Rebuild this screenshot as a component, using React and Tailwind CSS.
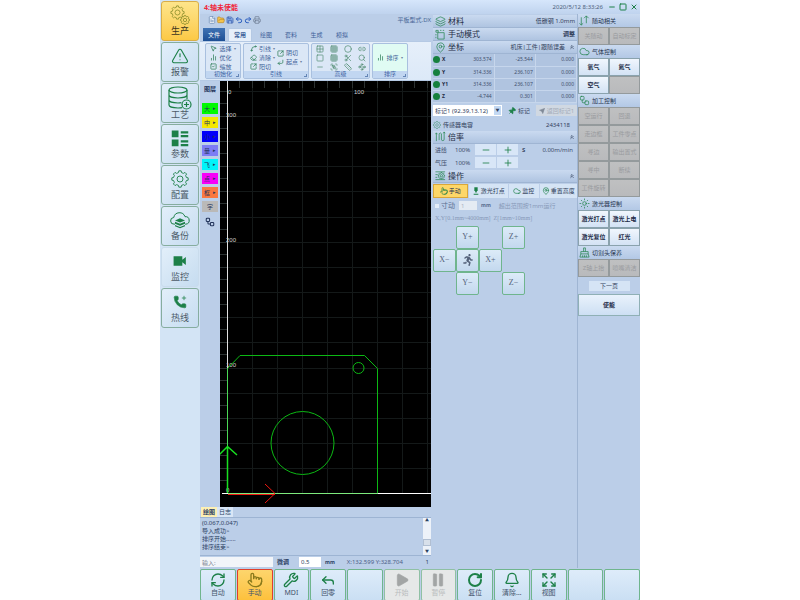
import {
  Bell, ChevronsUp, Cloud, FileText, FolderOpen, Layers, MapPin, Minus, Pause, Phone, Pin, Play, Plus,
  Pointer, Printer, RefreshCw, Reply, RotateCw, Save, Square, TriangleAlert, Undo2, Redo2, Wrench, X,
  MousePointer2, ChartNoAxesColumn, SquareArrowOutUpRight, SquareCheck, Eraser, CornerDownLeft, Spline,
  Grid2x2, Grid3x3, Circle, Link2, Search, Scissors, Ruler, Group, Waypoints, Sun, Workflow, Send, Expand,
} from 'lucide-react';
import { FaRunning } from 'react-icons/fa';

const GREEN = '#1d8048';

// Outline of a gear with flat teeth
function gearPath(cx, cy, r, teeth) {
  const pts = [];
  for (let i = 0; i < teeth; i++) {
    [[-0.3, 0.8], [-0.18, 1], [0.18, 1], [0.3, 0.8]].forEach(([off, k]) => {
      const a = ((i + off) / teeth) * Math.PI * 2;
      pts.push(`${(cx + Math.sin(a) * r * k).toFixed(2)},${(cy - Math.cos(a) * r * k).toFixed(2)}`);
    });
  }
  return `M${pts.join('L')}Z`;
}

function GearsIcon({ className }) {
  return (
    <svg viewBox="0 0 24 24" fill="none" stroke="#8b8f2c" strokeWidth="1" strokeLinejoin="round" className={className}>
      <path d={gearPath(9, 9, 8, 8)} />
      <circle cx="9" cy="9" r="3" />
      <path d={gearPath(18, 18, 5.5, 8)} />
      <circle cx="18" cy="18" r="2" />
    </svg>
  );
}

function GearIcon({ className }) {
  return (
    <svg viewBox="0 0 24 24" fill="none" stroke={GREEN} strokeWidth="1.2" strokeLinejoin="round" className={className}>
      <path d={gearPath(12, 12, 11, 8)} />
      <circle cx="12" cy="12" r="4" />
    </svg>
  );
}

function DatabaseIcon({ className }) {
  return (
    <svg viewBox="0 0 24 24" fill="none" stroke={GREEN} strokeWidth="1.2" className={className}>
      <ellipse cx="10" cy="4" rx="9" ry="3" />
      <path d="M1 4v15c0 1.700 4 3 9 3 1.500 0 3-.1 4-.4M19 4v9M1 9c0 1.700 4 3 9 3s9-1.300 9-3M1 14c0 1.700 4 3 9 3 1.200 0 2.300-.1 3.400-.3" />
      <circle cx="18.500" cy="18.500" r="4.500" />
      <path d="M18.500 16v5M16 18.500h5" />
    </svg>
  );
}

function ParamsIcon({ className }) {
  return (
    <svg viewBox="0 0 24 24" fill={GREEN} className={className}>
      <path d="M1 2h9v9H1zM1 14h9v9H1zM13 3h10v3H13zM13 8h10v3H13zM13 15h10v3H13zM13 20h10v3H13z" />
    </svg>
  );
}

function BackupIcon({ className }) {
  return (
    <svg viewBox="0 0 24 24" fill="none" stroke={GREEN} strokeWidth="1.200" className={className}>
      <path d="M6 17H5a4 4 0 0 1-.5-8A7 7 0 0 1 18 8a4.500 4.500 0 0 1 1 9h-1" />
      <path d="M12 10l6 2.500-6 2.500-6-2.500zM6 14l6 2.500 6-2.500v2.500L12 19l-6-2.500zM6 18l6 2.500 6-2.500v1.500L12 22l-6-2.500z" fill={GREEN} stroke="none" />
    </svg>
  );
}

function CameraIcon({ className }) {
  return (
    <svg viewBox="0 0 24 24" fill={GREEN} className={className}>
      <path d="M1 4h15v6l6-5v14l-6-5v6H1z" />
    </svg>
  );
}

function HotlineIcon({ className }) {
  return (
    <span className={`relative ${className}`}>
      <Phone className="size-full" fill={GREEN} strokeWidth={1} />
      <Plus className="absolute top-0 right-0 size-1.5" strokeWidth={3} />
    </span>
  );
}

function ChipIcon({ className }) {
  return (
    <svg viewBox="0 0 24 24" fill="none" stroke={GREEN} strokeWidth="1.500" className={className}>
      <path d="M6 8h14v14H6zM2 3h5v4H2zM11 3h3M17 3h3M2 11v3M2 17v3" />
    </svg>
  );
}

function RateIcon({ className }) {
  return (
    <svg viewBox="0 0 24 24" fill="none" stroke={GREEN} strokeWidth="1.500" className={className}>
      <path d="M3 22V5M1 7l2-3 2 3M9 20V6a3 3 0 0 1 5 0v12a3 3 0 0 0 6 0V3M18 5l2-3 2 3" />
    </svg>
  );
}

function OperateIcon({ className }) {
  return (
    <svg viewBox="0 0 24 24" fill="none" stroke={GREEN} strokeWidth="1.500" className={className}>
      <path d="M1 4h21M1 10h5M1 16h4M1 21h21" />
      <path d={gearPath(14, 12.5, 7, 8)} />
      <circle cx="14" cy="12.500" r="2.500" />
    </svg>
  );
}

function HeadIcon({ className }) {
  return (
    <svg viewBox="0 0 24 24" fill={GREEN} className={className}>
      <path d="M7 1h10v11h-2l-2 5h-2l-2-5H7zM5 20h14v3H5z" />
    </svg>
  );
}

function FollowIcon({ className }) {
  return (
    <svg viewBox="0 0 24 24" fill="none" stroke={GREEN} strokeWidth="1.500" className={className}>
      <path d="M5 5v17M1 18l4 4 4-4M16 18V2M11 7l5-5 5 5" />
    </svg>
  );
}

function BrushIcon({ className }) {
  return (
    <svg viewBox="0 0 24 24" fill="none" stroke={GREEN} strokeWidth="1.500" className={className}>
      <path d="M10 10V2h4v8M4 10h16v5H4zM4 15L2 22h20l-2-7M8 22v-4M12 22v-4M16 22v-4" />
    </svg>
  );
}

const navItems = [
  { label: '生产', icon: GearsIcon, size: 'size-5', active: true },
  { label: '报警', icon: TriangleAlert, size: 'size-[18px]' },
  { label: '工艺', icon: DatabaseIcon, size: 'size-6' },
  { label: '参数', icon: ParamsIcon, size: 'size-[18px]' },
  { label: '配置', icon: GearIcon, size: 'size-[18px]' },
  { label: '备份', icon: BackupIcon, size: 'size-5' },
  { label: '监控', icon: CameraIcon, size: 'size-3.5', flat: true },
  { label: '热线', icon: HotlineIcon, size: 'size-3.5' },
];

const layers = [
  { label: '大', color: 'bg-[#00fa00]' },
  { label: '中', color: 'bg-[#f4e800]' },
  { label: '小', color: 'bg-[#0000fa]' },
  { label: '量', color: 'bg-[#7d7df5]' },
  { label: '飞', color: 'bg-[#00f4fa]' },
  { label: '点', color: 'bg-[#f800f8]' },
  { label: '框', color: 'bg-[#fa7840]' },
];

const axes = [
  ['X', '303.574', '-25.544', '0.000'],
  ['Y', '314.336', '236.107', '0.000'],
  ['Y1', '314.336', '236.107', '0.000'],
  ['Z', '-4.744', '0.301', '0.000'],
];

const bottomItems = [
  { label: '自动', icon: RefreshCw },
  { label: '手动', icon: Pointer, active: true },
  { label: 'MDI', icon: Wrench },
  { label: '回零', icon: Reply },
  {},
  { label: '开始', icon: Play, disabled: true },
  { label: '暂停', icon: Pause, disabled: true },
  { label: '复位', icon: RotateCw, bold: true },
  { label: '清除…', icon: Bell },
  { label: '视图', icon: Expand },
  {},
  {},
];

function Sidebar() {
  return (
    <nav className="flex w-10 shrink-0 flex-col gap-px bg-[#d3e4f5] px-px pt-px">
      {navItems.map(({ label, icon: Icon, size, active, flat }) => (
        <button
          key={label}
          className={`flex h-10 flex-col items-center rounded-[3px] border px-1 pt-0.5 pb-1 ${
            active
              ? 'border-[#d8ad48] bg-linear-to-b from-[#fde58a] to-[#fcc945] text-[#3a3420]'
              : flat
                ? 'border-[#c9dcec] bg-linear-to-br from-[#e2effa] to-[#c6dcf0] text-[#4c5a68]'
                : 'border-[#86ad9f] bg-linear-to-br from-[#e2effa] to-[#c6dcf0] text-[#4c5a68]'
          }`}
        >
          <span className="flex h-6 items-center justify-center text-[#1d8048]">
            <Icon className={size} strokeWidth={1.5} />
          </span>
          <span className="text-[9px] leading-[10px]">{label}</span>
        </button>
      ))}
    </nav>
  );
}

function TitleBar() {
  return (
    <header className="flex h-3.5 items-center justify-between bg-linear-to-b from-[#d6e6fb] to-[#bfd3ee] pr-0.5 pl-1">
      <h1 className="text-[7px] font-bold text-[#f0283c]">4:轴未使能</h1>
      <div className="flex items-center gap-[3px] text-[#1d8048]">
        <time className="mr-0.5 text-[6px] text-[#4e5f7c]">2020/5/12 8:33:26</time>
        <button aria-label="最小化"><Minus className="size-2" strokeWidth={3} /></button>
        <button aria-label="最大化"><Square className="size-2" strokeWidth={3} /></button>
        <button aria-label="关闭"><X className="size-2" strokeWidth={3} /></button>
      </div>
    </header>
  );
}

function RibbonItem({ icon: Icon, label, caret }) {
  return (
    <button className="flex items-center gap-0.5 whitespace-nowrap">
      <Icon className="size-[7px] text-[#2f7f5a]" strokeWidth={2.5} />
      {label}
      {caret && <span className="text-[4px] text-[#6b7f9e]">▾</span>}
    </button>
  );
}

function RibbonGroup({ title, width, fill = 'bg-[#dbe7f6]', children }) {
  return (
    <section className={`flex flex-col rounded-xs border border-[#a9c0df] ${width} ${fill}`}>
      <div className="flex flex-1 items-center justify-center gap-0.5">{children}</div>
      <h2 className="relative bg-[#c1d6f1] text-center leading-[7px] text-[#3f65a3]">
        {title}
        <span className="absolute right-px bottom-px size-[3px] border-r border-b border-[#6485b5]" />
      </h2>
    </section>
  );
}

function Ribbon() {
  const tools = [Grid2x2, Grid3x3, Circle, Link2, Square, Grid3x3, Scissors, Search, Minus, Group, Ruler, Waypoints];
  return (
    <div className="text-[6px] text-[#3d5f99]">
      <div className="flex h-3 items-center gap-px pl-2">
        <FileText className="size-2 text-[#5b7fae]" fill="#fff" />
        <FolderOpen className="size-2 text-[#b8872b]" fill="#f3c34c" />
        <Save className="size-2 text-[#2f55a6]" fill="#8fb0e6" />
        <Undo2 className="size-2 text-[#2c5fc0]" strokeWidth={3} />
        <Redo2 className="size-2 text-[#2c5fc0]" strokeWidth={3} />
        <Printer className="size-2 text-[#68768c]" />
        <span className="ml-auto whitespace-nowrap text-[#4a6796]">平板型式.DX</span>
      </div>
      <div className="mt-0.5 flex h-[13px] items-stretch gap-[3px] pl-[3px]">
        <button className="w-[22px] bg-linear-to-b from-[#3f72b4] to-[#1d4f94] text-white">文件</button>
        <button className="w-6 rounded-t-xs border border-b-0 border-[#b5c9e4] bg-[#e6effa] font-bold">常用</button>
        <button className="w-[22px]">绘图</button>
        <button className="w-[22px]">套料</button>
        <button className="w-[23px]">生成</button>
        <button className="w-[22px]">模拟</button>
      </div>
      <div className="flex h-10 gap-0.5 border-y border-[#b5c9e4] bg-linear-to-b from-[#e6effa] to-[#dce9f8] pt-px pb-px pl-[5px]">
        <RibbonGroup title="初始化" width="w-9">
          <div className="flex flex-col gap-0.5">
            <RibbonItem icon={MousePointer2} label="选择" caret />
            <RibbonItem icon={ChartNoAxesColumn} label="优化" />
            <RibbonItem icon={SquareCheck} label="缩放" />
          </div>
        </RibbonGroup>
        <RibbonGroup title="引线" width="w-[66px]">
          <div className="flex flex-col gap-0.5">
            <RibbonItem icon={Spline} label="引线" caret />
            <RibbonItem icon={Eraser} label="清除" caret />
            <RibbonItem icon={SquareArrowOutUpRight} label="阳切" />
          </div>
          <div className="flex flex-col gap-0.5">
            <RibbonItem icon={SquareArrowOutUpRight} label="阴切" />
            <RibbonItem icon={CornerDownLeft} label="起点" caret />
          </div>
        </RibbonGroup>
        <RibbonGroup title="高级" width="w-[59px]">
          <div className="grid grid-cols-4 gap-x-1.5 gap-y-px">
            {tools.map((Tool, i) => (
              <button key={i} aria-label={`工具${i + 1}`}>
                <Tool className="size-2 text-[#4c8a6c]" />
              </button>
            ))}
          </div>
        </RibbonGroup>
        <RibbonGroup title="排序" width="w-9" fill="bg-[#e0fbf3]">
          <RibbonItem icon={ChartNoAxesColumn} label="排序" caret />
        </RibbonGroup>
      </div>
    </div>
  );
}

function LayerBar() {
  return (
    <div className="flex w-5 shrink-0 flex-col items-center gap-[3px] text-[6px] text-[#22335a]">
      <span className="mt-1 mb-1.5 leading-[9px] font-bold">图层</span>
      {layers.map(({ label, color }) => (
        <button key={label} className={`flex h-[11px] w-4 items-center justify-between px-0.5 ${color}`}>
          {label}
          <span className="text-[5px]">▸</span>
        </button>
      ))}
      <button className="h-[11px] w-4 bg-[#bab9b8]">字</button>
      <Workflow className="mt-0.5 size-2.5" strokeWidth={2.5} />
    </div>
  );
}

function Drawing() {
  const cols = [32, 57, 82, 107, 132, 157, 182, 207];
  const rows = [10, 35, 60, 85, 110, 136, 161, 186, 211, 236, 261, 287, 312, 337, 362, 387];
  return (
    <svg viewBox="0 0 211 426" preserveAspectRatio="xMinYMax meet" className="h-full w-full bg-black" fill="none">
      <g stroke="#141919">
        {cols.map((x) => <path key={x} d={`M${x}.5 0V412`} />)}
        {rows.map((y) => <path key={y} d={`M8 ${y}.5H211`} />)}
      </g>
      <g stroke="#2c3232">
        {cols.map((x) => <path key={x} d={`M${x}.5 0v7M${x - 13}.5 0v7`} />)}
        {rows.map((y) => <path key={y} d={`M0 ${y}.5h7M0 ${y + 12}.5h7`} />)}
      </g>
      <path d="M7.500 0V288" stroke="#e0e0e0" />
      <path d="M2 412.500H211" stroke="#fff" />
      <g fill="#d0d0d0" className="font-['Liberation_Sans',sans-serif] text-[6px]">
        <text x="8" y="13">0</text>
        <text x="134" y="13">100</text>
        <text x="6" y="36">300</text>
        <text x="6" y="161">200</text>
        <text x="6" y="286">100</text>
        <text x="6" y="411">0</text>
      </g>
      <g stroke="#0cb814">
        <path d="M7.500 287.500L20 274.500H144.500L157.500 287.500V412.500" />
        <circle cx="138.500" cy="287" r="5.500" />
        <circle cx="82.500" cy="362" r="31.500" />
      </g>
      <path d="M8 412.500H157" stroke="#7dea7d" />
      <path d="M7.500 412V287" stroke="#4ad855" />
      <path d="M7.500 412V365.500M-1 374L7.500 365.500L17 374" stroke="#18e020" strokeWidth="1.500" />
      <path d="M8 413.500H55M45 403L55 412.500L45 422" stroke="#f01810" />
    </svg>
  );
}

function LogPane() {
  return (
    <div className="text-[6px] text-[#2b3f63]">
      <div className="flex h-[11px] items-stretch border-b border-[#9db4d3] pl-px">
        <button className="w-4 bg-[#fdf0b4] font-bold">绘图</button>
        <button className="w-4 bg-[#d9e6f6]">日志</button>
      </div>
      <div className="flex h-[37px]">
        <div role="log" className="flex-1 pt-px pl-0.5 leading-[8px]">
          <p>(0.067,0.047)</p>
          <p>导入成功&gt;</p>
          <p>排序开始......</p>
          <p>排序结束&gt;</p>
        </div>
        <div className="flex w-2 flex-col items-center justify-between bg-[#edf2f9] py-px text-[4px]">
          <span>▲</span>
          <span className="mt-auto mb-1 h-[7px] w-full border border-[#b1bfd2] bg-[#d8e0ea]" />
          <span>▼</span>
        </div>
      </div>
      <div className="flex h-[13px] items-center border-t border-[#9db4d3]">
        <input aria-label="输入" defaultValue="输入:" className="h-2.5 w-[73px] bg-[#f2f5f9] px-0.5 text-[#7c8594]" />
        <label className="ml-1 flex items-center gap-2.5 font-bold">
          微调
          <input defaultValue="0.5" className="h-2.5 w-[22px] bg-white px-0.5 font-normal" />
        </label>
        <span className="ml-1 text-[5px] font-bold">mm</span>
        <output className="ml-3 text-[#4d6288]">X:132.599 Y:328.704</output>
        <span className="ml-auto pr-0.5">1</span>
      </div>
    </div>
  );
}

function PanelHeader({ icon: Icon, title, children }) {
  return (
    <div className="flex h-[13px] items-center gap-0.5 border-b border-[#9fb5d3] bg-linear-to-b from-[#cadaf0] to-[#afc4e1] px-0.5">
      <Icon className="size-[11px] shrink-0 text-[#1d8048]" strokeWidth={1.5} />
      <h2 className="text-[8px] whitespace-nowrap text-[#1f2c44]">{title}</h2>
      <div className="ml-auto flex items-center gap-1 text-[6px] whitespace-nowrap text-[#33425d]">{children}</div>
    </div>
  );
}

function RateRow({ label, children }) {
  return (
    <div className="flex h-3 items-center text-[6px] text-[#3c4c69]">
      <span className="w-5 pl-0.5">{label}</span>
      <span className="w-[22px] pl-0.5">100%</span>
      <button aria-label={`${label}减`} className="mr-px flex h-[11px] w-[21px] items-center justify-center bg-[#d8e6f7]">
        <Minus className="size-2.5 text-[#1d8048]" />
      </button>
      <button aria-label={`${label}加`} className="flex h-[11px] w-[21px] items-center justify-center bg-[#d8e6f7]">
        <Plus className="size-2.5 text-[#1d8048]" />
      </button>
      {children}
    </div>
  );
}

function JogButton({ children, className = '' }) {
  return (
    <button
      className={`flex size-[23px] items-center justify-center rounded-xs border border-[#6fb58d] bg-linear-to-b from-[#dcebf8] to-[#c3d8ee] font-['Liberation_Serif',serif] text-[8px] text-[#54627a] ${className}`}
    >
      {children}
    </button>
  );
}

function StatusPanel() {
  const modes = [
    { label: '手动', icon: Pointer, width: 'w-[33px]', active: true },
    { label: '激光打点', icon: HeadIcon, width: 'w-[38px]' },
    { label: '监控', icon: Cloud, width: 'w-7' },
    { label: '重置高度', icon: MapPin, width: 'w-9' },
  ];
  return (
    <section className="w-[146px] shrink-0 pt-px pl-0.5">
      <PanelHeader icon={Layers} title="材料">低碳钢 1.0mm</PanelHeader>
      <PanelHeader icon={ChipIcon} title="手动模式"><b>调整</b></PanelHeader>
      <PanelHeader icon={MapPin} title="坐标">
        机床|工件|跟随误差 <ChevronsUp className="size-1.5" strokeWidth={3} />
      </PanelHeader>
      <table className="w-full table-fixed text-[5px] text-[#3f4f6d]">
        <tbody>
          {axes.map(([name, ...values]) => (
            <tr key={name} className="h-3 border-b border-[#c6d6ec] bg-[#b0c4e0]">
              <th scope="row" className="w-5 text-left text-[#1c2a44]">
                <span className="flex items-center gap-0.5">
                  <span className="size-[7px] rounded-full bg-[#16803e]" />
                  {name}
                </span>
              </th>
              {values.map((v, i) => (
                <td key={i} className="border-r border-[#c6d6ec] pr-0.5 text-right">{v}</td>
              ))}
            </tr>
          ))}
        </tbody>
      </table>
      <div className="my-px flex h-3.5 items-center gap-1 text-[6px] text-[#33425d]">
        <div className="relative">
          <select aria-label="标记" className="h-[11px] w-[69px] appearance-none bg-white pl-0.5">
            <option>标记1 (92.39,13.12)</option>
          </select>
          <span className="pointer-events-none absolute top-px right-px flex h-[9px] w-[7px] items-center justify-center bg-[#c3d9f3] text-[4px]">▼</span>
        </div>
        <button className="flex items-center gap-0.5 px-0.5 whitespace-nowrap">
          <Pin className="size-2 rotate-45 text-[#1d8048]" fill={GREEN} />
          标记
        </button>
        <button disabled className="flex h-[11px] flex-1 items-center justify-center gap-0.5 bg-[#d0d8e2] whitespace-nowrap text-[#a3abb8]">
          <Send className="size-1.5 text-[#808a98]" fill="#808a98" />
          返回标记1
        </button>
      </div>
      <div className="flex h-3 items-center gap-0.5 text-[6px] text-[#33425d]">
        <GearIcon className="size-2" />
        传感器电容
        <span className="ml-auto pr-[7px]">2434118</span>
      </div>
      <PanelHeader icon={RateIcon} title="倍率"><ChevronsUp className="size-1.5" strokeWidth={3} /></PanelHeader>
      <div className="flex flex-col gap-px pb-px">
        <RateRow label="进给">
          <b className="ml-1">S</b>
          <span className="ml-auto pr-1">0.00m/min</span>
        </RateRow>
        <RateRow label="气压" />
      </div>
      <PanelHeader icon={OperateIcon} title="操作"><ChevronsUp className="size-1.5" strokeWidth={3} /></PanelHeader>
      <div className="flex h-4 gap-px py-px text-[6px]">
        {modes.map(({ label, icon: Icon, width, active }) => (
          <button
            key={label}
            className={`flex grow items-center justify-center gap-px whitespace-nowrap text-[#2b3a55] ${width} ${
              active ? 'border border-[#d9a73a] bg-[#fdd768]' : 'bg-[#d5e4f5]'
            }`}
          >
            <Icon className="size-2 shrink-0 text-[#1d8048]" />
            {label}
          </button>
        ))}
      </div>
      <div className="flex h-3.5 items-center gap-1 pl-0.5 text-[6px] text-[#5a6d90]">
        <label className="flex items-center gap-0.5 text-[7px]">
          <input type="checkbox" className="size-1 appearance-none bg-[#e4edf8]" />
          寸动
        </label>
        <input aria-label="寸动距离" defaultValue="1" className="h-[9px] w-[18px] bg-[#e4ebf3] px-0.5 text-[#a9b3c3]" />
        <b className="text-[5px]">mm</b>
        <span className="ml-1 whitespace-nowrap text-[#8799b8]">超出范围按1mm运行</span>
      </div>
      <p className="pl-0.5 font-['Liberation_Serif',serif] text-[6px] leading-[10px] text-[#8799b8]">X,Y[0.1mm~4000mm]&nbsp; Z[1mm~10mm]</p>
      <div className="mt-[3px] grid w-[92px] grid-cols-4">
        <JogButton className="col-start-2">Y+</JogButton>
        <JogButton className="col-start-4">Z+</JogButton>
        <JogButton className="col-start-1">X−</JogButton>
        <JogButton><FaRunning aria-label="快速" className="size-3" /></JogButton>
        <JogButton>X+</JogButton>
        <JogButton className="col-start-2">Y−</JogButton>
        <JogButton className="col-start-4">Z−</JogButton>
      </div>
    </section>
  );
}

function ActionGroup({ icon: Icon, title, actions, disabled }) {
  return (
    <section>
      <h2 className="flex h-[13px] items-center gap-0.5 bg-linear-to-b from-[#cadaf0] to-[#b3c8e5] pl-px text-[6px] text-[#26344f]">
        <Icon className="size-[11px] text-[#1d8048]" strokeWidth={1.5} />
        {title}
      </h2>
      <div className="grid grid-cols-2">
        {actions.map((action, i) => (
          <button
            key={i}
            disabled={disabled || !action}
            className="h-[18px] border border-[#8aa2ad] bg-linear-to-b from-[#f0f6fd] to-[#d3e2f4] px-px text-[6px] font-bold whitespace-nowrap text-[#1d2c48] disabled:border-[#949a9c] disabled:from-[#bfc0c1] disabled:to-[#b9babc] disabled:font-normal disabled:text-[#999b9e]"
          >
            {action}
          </button>
        ))}
      </div>
    </section>
  );
}

function ActionPanel() {
  return (
    <aside className="flex w-[63px] shrink-0 flex-col border-l border-[#9fb5d3]">
      <ActionGroup icon={FollowIcon} title="随动相关" actions={['关随动', '自动标定']} disabled />
      <ActionGroup icon={Cloud} title="气体控制" actions={['氧气', '氮气', '空气', '']} />
      <ActionGroup
        icon={Workflow}
        title="加工控制"
        actions={['空运行', '回退', '走边框', '工件零点', '寻边', '输出置式', '寻中', '断续', '工件旋转', '']}
        disabled
      />
      <ActionGroup icon={Sun} title="激光器控制" actions={['激光打点', '激光上电', '激光复位', '红光']} />
      <ActionGroup icon={BrushIcon} title="切割头保养" actions={['Z轴上抬', '喷嘴清洁']} disabled />
      <button className="mx-auto mt-1 h-2.5 w-[41px] bg-[#d5e4f5] text-[6px] text-[#33425d]">下一页</button>
      <button className="mt-[3px] h-[22px] border border-[#8fb0b5] bg-linear-to-b from-[#e9f2fc] to-[#cddff3] text-[6px] font-bold text-[#1d2c48]">
        使能
      </button>
    </aside>
  );
}

function BottomBar() {
  return (
    <footer className="grid h-8 shrink-0 grid-cols-12 gap-px pt-px">
      {bottomItems.map(({ label, icon: Icon, active, disabled, bold }, i) => (
        <button
          key={i}
          disabled={disabled}
          aria-label={label || '空'}
          className={`flex flex-col items-center justify-between rounded-xs border pt-0.5 pb-0.5 ${
            active
              ? 'border-[#e0402c] bg-linear-to-b from-[#fdd56c] to-[#fdc13c] text-[#8a7a1c]'
              : disabled
                ? 'border-[#8fc0a4] bg-[#e6e8e8] text-[#a2a5a5]'
                : 'border-[#6fb58d] bg-linear-to-b from-[#deecfa] to-[#cadff3] text-[#1d8048]'
          }`}
        >
          {Icon && (
            <Icon
              className="size-4"
              fill={disabled ? 'currentColor' : 'none'}
              strokeWidth={bold ? 3 : disabled ? 1 : 2}
            />
          )}
          {label && (
            <span className={`text-[7px] leading-[10px] ${disabled ? 'text-[#b9bcbd]' : 'text-[#43536b]'}`}>{label}</span>
          )}
        </button>
      ))}
    </footer>
  );
}

export default function App() {
  return (
    <div className="min-h-screen bg-white font-['Noto_Sans','Noto_Sans_CJK_SC',sans-serif] leading-none">
      <div className="mx-auto flex h-screen min-h-[600px] w-3/5 min-w-[480px]">
        <Sidebar />
        <div className="flex min-w-0 flex-1 flex-col bg-[#bbcee8]">
          <TitleBar />
          <main className="flex min-h-0 flex-1">
            <div className="flex min-w-0 flex-1 flex-col">
              <Ribbon />
              <div className="flex min-h-0 flex-1">
                <LayerBar />
                <div className="min-w-0 flex-1">
                  <Drawing />
                </div>
              </div>
              <LogPane />
            </div>
            <StatusPanel />
            <ActionPanel />
          </main>
          <BottomBar />
        </div>
      </div>
    </div>
  );
}
